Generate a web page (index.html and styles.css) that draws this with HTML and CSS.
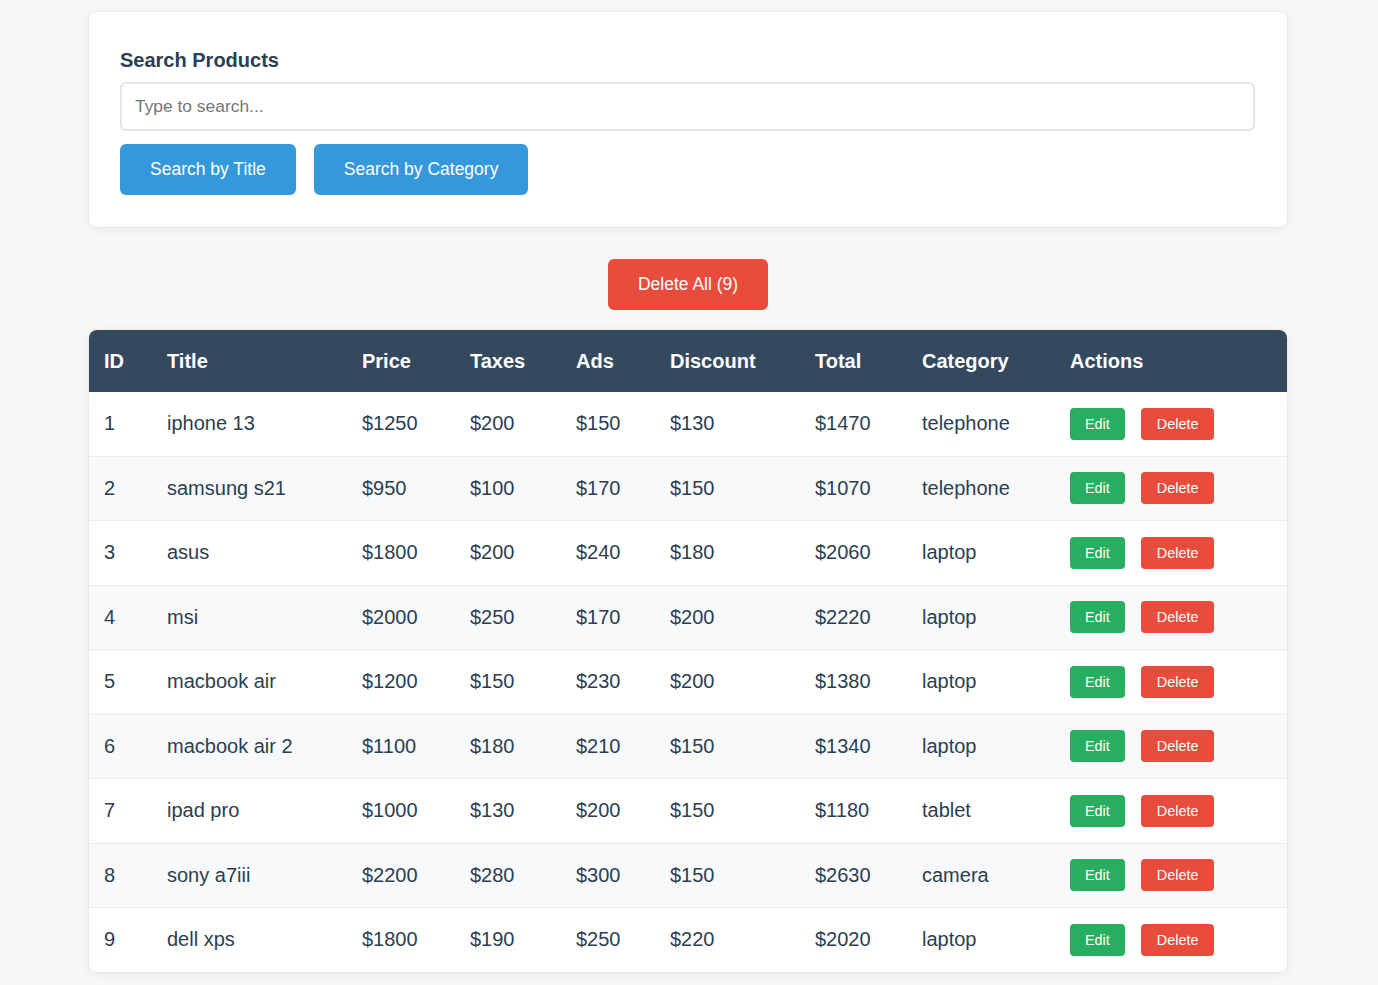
FILE: index.html
```html
<!DOCTYPE html>
<html lang="en">
<head>
<meta charset="utf-8">
<title>Products</title>
<link rel="stylesheet" href="styles.css">
</head>
<body>
<div class="page">
  <section class="search-card">
    <label class="search-label" for="q">Search Products</label>
    <input id="q" class="search-input" type="text" placeholder="Type to search...">
    <div class="search-actions">
      <button class="btn btn-blue">Search by Title</button>
      <button class="btn btn-blue">Search by Category</button>
    </div>
  </section>

  <div class="delete-all-row">
    <button class="btn btn-red">Delete All (9)</button>
  </div>

  <div class="table-wrap">
    <table class="products">
      <colgroup>
        <col class="c-id"><col class="c-title"><col class="c-price"><col class="c-taxes"><col class="c-ads"><col class="c-discount"><col class="c-total"><col class="c-category"><col class="c-actions">
      </colgroup>
      <thead>
        <tr><th>ID</th><th>Title</th><th>Price</th><th>Taxes</th><th>Ads</th><th>Discount</th><th>Total</th><th>Category</th><th>Actions</th></tr>
      </thead>
      <tbody>
        <tr><td>1</td><td>iphone 13</td><td>$1250</td><td>$200</td><td>$150</td><td>$130</td><td>$1470</td><td>telephone</td><td><div class="row-actions"><button class="sbtn sbtn-green">Edit</button><button class="sbtn sbtn-red">Delete</button></div></td></tr>
        <tr><td>2</td><td>samsung s21</td><td>$950</td><td>$100</td><td>$170</td><td>$150</td><td>$1070</td><td>telephone</td><td><div class="row-actions"><button class="sbtn sbtn-green">Edit</button><button class="sbtn sbtn-red">Delete</button></div></td></tr>
        <tr><td>3</td><td>asus</td><td>$1800</td><td>$200</td><td>$240</td><td>$180</td><td>$2060</td><td>laptop</td><td><div class="row-actions"><button class="sbtn sbtn-green">Edit</button><button class="sbtn sbtn-red">Delete</button></div></td></tr>
        <tr><td>4</td><td>msi</td><td>$2000</td><td>$250</td><td>$170</td><td>$200</td><td>$2220</td><td>laptop</td><td><div class="row-actions"><button class="sbtn sbtn-green">Edit</button><button class="sbtn sbtn-red">Delete</button></div></td></tr>
        <tr><td>5</td><td>macbook air</td><td>$1200</td><td>$150</td><td>$230</td><td>$200</td><td>$1380</td><td>laptop</td><td><div class="row-actions"><button class="sbtn sbtn-green">Edit</button><button class="sbtn sbtn-red">Delete</button></div></td></tr>
        <tr><td>6</td><td>macbook air 2</td><td>$1100</td><td>$180</td><td>$210</td><td>$150</td><td>$1340</td><td>laptop</td><td><div class="row-actions"><button class="sbtn sbtn-green">Edit</button><button class="sbtn sbtn-red">Delete</button></div></td></tr>
        <tr><td>7</td><td>ipad pro</td><td>$1000</td><td>$130</td><td>$200</td><td>$150</td><td>$1180</td><td>tablet</td><td><div class="row-actions"><button class="sbtn sbtn-green">Edit</button><button class="sbtn sbtn-red">Delete</button></div></td></tr>
        <tr><td>8</td><td>sony a7iii</td><td>$2200</td><td>$280</td><td>$300</td><td>$150</td><td>$2630</td><td>camera</td><td><div class="row-actions"><button class="sbtn sbtn-green">Edit</button><button class="sbtn sbtn-red">Delete</button></div></td></tr>
        <tr><td>9</td><td>dell xps</td><td>$1800</td><td>$190</td><td>$250</td><td>$220</td><td>$2020</td><td>laptop</td><td><div class="row-actions"><button class="sbtn sbtn-green">Edit</button><button class="sbtn sbtn-red">Delete</button></div></td></tr>
      </tbody>
    </table>
  </div>
</div>
</body>
</html>
```

FILE: styles.css
```css
* { box-sizing: border-box; }

html, body {
  margin: 0;
  background: #f8f7f5;
}

body {
  padding: 0 2px 0 0;
  font-family: "Liberation Sans", Arial, sans-serif;
  color: #2c3e50;
}

.page {
  width: 1198px;
  margin: 0 auto;
  padding: 12px 0 12px;
}

.search-card {
  background: #ffffff;
  border-radius: 8px;
  box-shadow: 0 2px 10px rgba(0, 0, 0, 0.07), 0 0 0 1px rgba(0, 0, 0, 0.025);
  padding: 37px 32px 32px 31px;
}

.search-label {
  display: block;
  font-size: 20px;
  font-weight: bold;
  line-height: 23px;
  color: #2c3e50;
  margin-bottom: 10px;
}

.search-input {
  display: block;
  width: 100%;
  height: 49px;
  padding: 0 13px;
  border: 2px solid #e1e5e9;
  border-radius: 6px;
  font-family: "Liberation Sans", Arial, sans-serif;
  font-size: 17.4px;
  color: #2c3e50;
  outline: none;
  background: #fff;
}

.search-input::placeholder {
  color: #757575;
}

.search-actions {
  display: flex;
  gap: 18px;
  margin-top: 13px;
}

.btn {
  border: none;
  border-radius: 6px;
  padding: 15px 30px;
  font-family: "Liberation Sans", Arial, sans-serif;
  font-size: 17.5px;
  line-height: 21px;
  color: #ffffff;
  cursor: pointer;
}

.btn-blue { background: #3498db; }
.btn-red { background: #e74c3c; }

.delete-all-row {
  display: flex;
  justify-content: center;
  margin: 32px 0 20px;
}

.table-wrap {
  background: #ffffff;
  border-radius: 8px;
  overflow: hidden;
  box-shadow: 0 2px 10px rgba(0, 0, 0, 0.07), 0 0 0 1px rgba(0, 0, 0, 0.025);
}

.products {
  width: 100%;
  border-collapse: collapse;
  table-layout: fixed;
}

.c-id { width: 63px; }
.c-title { width: 195px; }
.c-price { width: 108px; }
.c-taxes { width: 106px; }
.c-ads { width: 94px; }
.c-discount { width: 145px; }
.c-total { width: 107px; }
.c-category { width: 148px; }
.c-actions { width: 232px; }

.products th {
  background: #34495e;
  color: #ffffff;
  font-size: 20px;
  font-weight: bold;
  line-height: 22px;
  text-align: left;
  padding: 20px 15px;
}

.products td {
  font-size: 20px;
  line-height: 23px;
  padding: 15.75px 15px;
  vertical-align: middle;
  border-bottom: 1px solid #e9ecef;
  color: #2c3e50;
}

.products tbody tr:nth-child(even) td {
  background: #f8f9fa;
}

.products tbody tr:last-child td {
  border-bottom: none;
}

.row-actions {
  display: flex;
  gap: 16px;
  align-items: center;
}

.sbtn {
  border: none;
  border-radius: 4px;
  padding: 8px 15px;
  font-family: "Liberation Sans", Arial, sans-serif;
  font-size: 14.4px;
  line-height: 16px;
  color: #ffffff;
  cursor: pointer;
}

.sbtn-green { background: #27ae60; }
.sbtn-red { background: #e74c3c; padding: 8px 16px; }
```
